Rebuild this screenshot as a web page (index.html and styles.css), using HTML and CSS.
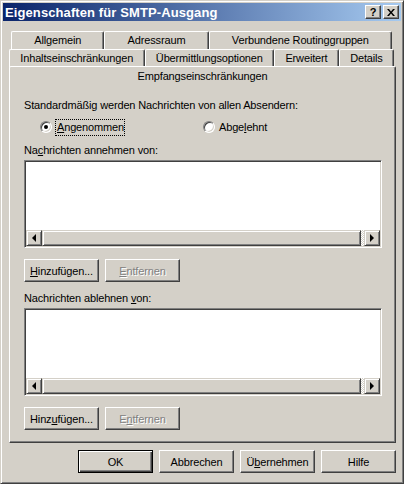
FILE: index.html
```html
<!DOCTYPE html>
<html lang="de">
<head>
    <meta charset="UTF-8">
    <title>Eigenschaften für SMTP-Ausgang</title>
    <link rel="stylesheet" href="styles.css">
</head>
<body>

    <div class="window">
        <!-- Title bar -->
        <div class="titlebar">
            <span class="title">Eigenschaften für SMTP-Ausgang</span>
            <div class="caption-buttons">
                <span class="caption-btn">?</span>
                <span class="caption-btn close">
                    <svg width="8" height="7" viewBox="0 0 8 7"><path d="M0 0h2l2 2.5L6 0h2L5 3.5 8 7H6L4 4.5 2 7H0l3-3.5z" fill="#000"/></svg>
                </span>
            </div>
        </div>

        <div class="client">
            <!-- Tabs -->
            <div class="tabs">
                <div class="tab-row row-back">
                    <div class="tab">Allgemein</div>
                    <div class="tab">Adressraum</div>
                    <div class="tab">Verbundene Routinggruppen</div>
                </div>
                <div class="tab-row row-middle">
                    <div class="tab">Inhaltseinschränkungen</div>
                    <div class="tab">Übermittlungsoptionen</div>
                    <div class="tab">Erweitert</div>
                    <div class="tab">Details</div>
                </div>
                <div class="tab-row row-front">
                    <div class="tab active">Empfangseinschränkungen</div>
                </div>
            </div>

            <!-- Tab page -->
            <div class="panel">
                <div class="label">Standardmäßig werden Nachrichten von allen Absendern:</div>
                <div class="radio-row">
                    <div class="radio-option first">
                        <span class="radio checked"></span>
                        <span class="focus"><u>A</u>ngenommen</span>
                    </div>
                    <div class="radio-option">
                        <span class="radio"></span>
                        <span>Abge<u>l</u>ehnt</span>
                    </div>
                </div>

                <div class="label section">Na<u>c</u>hrichten annehmen von:</div>
                <div class="listbox">
                    <div class="list-body"></div>
                    <div class="hscroll">
                        <span class="sb-btn left"></span>
                        <span class="sb-thumb"></span>
                        <span class="sb-track"></span>
                        <span class="sb-btn right"></span>
                    </div>
                </div>
                <div class="button-row">
                    <span class="btn"><u>H</u>inzufügen...</span>
                    <span class="btn disabled"><u>E</u>ntfernen</span>
                </div>

                <div class="label section-2">Nachrichten ablehnen <u>v</u>on:</div>
                <div class="listbox">
                    <div class="list-body"></div>
                    <div class="hscroll">
                        <span class="sb-btn left"></span>
                        <span class="sb-thumb"></span>
                        <span class="sb-track"></span>
                        <span class="sb-btn right"></span>
                    </div>
                </div>
                <div class="button-row">
                    <span class="btn">Hinz<u>u</u>fügen...</span>
                    <span class="btn disabled">E<u>n</u>tfernen</span>
                </div>
            </div>

            <!-- Dialog buttons -->
            <div class="dialog-buttons">
                <span class="btn default">OK</span>
                <span class="btn">Abbrechen</span>
                <span class="btn">Ü<u>b</u>ernehmen</span>
                <span class="btn">Hilfe</span>
            </div>
        </div>
    </div>

</body>
</html>
```

FILE: styles.css
```css
body {
    margin: 0;
    padding: 0;
    background-color: #d4d0c8;
    font-family: "Liberation Sans", Arial, sans-serif;
    font-size: 11px;
    letter-spacing: -0.15px;
    color: #000;
}
u {
    text-decoration: underline;
    text-underline-offset: 1px;
}
.window {
    width: 404px;
    height: 484px;
    box-sizing: border-box;
    padding: 2px;
    border: 1px solid;
    border-color: #d4d0c8 #404040 #404040 #d4d0c8;
    box-shadow: inset 1px 1px #fff, inset -1px -1px #808080;
    background: #d4d0c8;
}

/* title bar */
.titlebar {
    height: 18px;
    display: flex;
    align-items: center;
    justify-content: space-between;
    padding: 0 2px 0 2px;
    background: linear-gradient(to right, #0a246a, #a6caf0);
}
.title {
    color: #fff;
    font-weight: bold;
    font-size: 13px;
    letter-spacing: 0.1px;
}
.caption-buttons {
    display: flex;
    gap: 2px;
}
.caption-btn {
    width: 16px;
    height: 14px;
    box-sizing: border-box;
    display: flex;
    align-items: center;
    justify-content: center;
    background: #d4d0c8;
    border: 1px solid;
    border-color: #fff #404040 #404040 #fff;
    box-shadow: inset -1px -1px #808080;
    font-weight: bold;
    font-size: 11px;
    line-height: 1;
}

/* tabs */
.client {
    padding: 10px 5px 0 6px;
}
.tab-row {
    display: flex;
}
.row-back {
    height: 18px;
    padding: 0 4px 0 2px;
}
.row-middle {
    height: 17px;
    padding: 0 2px 0 0;
}
.row-front {
    height: 20px;
}
.tab {
    flex: 1 1 auto;
    padding: 0 6px;
    box-sizing: border-box;
    height: 19px;
    text-align: center;
    line-height: 17px;
    border-left: 1px solid #fff;
    border-top: 1px solid #fff;
    border-right: 1px solid #404040;
    border-radius: 2px 2px 0 0;
    box-shadow: inset -1px 0 #808080;
    background: #d4d0c8;
}
.tab.active {
    height: 20px;
    line-height: 18px;
}

/* tab page */
.panel {
    border: 1px solid;
    border-top: none;
    border-color: #fff #404040 #404040 #fff;
    box-shadow: inset -1px -1px #808080;
    padding: 13px 13px 12px 14px;
}
.label {
    height: 13px;
    line-height: 13px;
    white-space: nowrap;
}
.radio-row {
    display: flex;
    height: 16px;
    align-items: center;
    margin: 7px 0 0 16px;
}
.radio-option {
    display: flex;
    align-items: center;
    gap: 4px;
}
.radio-option.first {
    width: 163px;
}
.radio {
    width: 12px;
    height: 12px;
    border-radius: 50%;
    box-sizing: border-box;
    position: relative;
    background: #fff;
    border: 1px solid;
    border-color: #808080 #fff #fff #808080;
    box-shadow: inset 1px 1px #404040, inset -1px -1px #d4d0c8;
}
.radio.checked::after {
    content: "";
    position: absolute;
    left: 3px;
    top: 3px;
    width: 4px;
    height: 4px;
    border-radius: 50%;
    background: #000;
}
.focus {
    outline: 1px dotted #000;
    padding: 1px 0 1px 1px;
    line-height: 13px;
}
.section {
    margin-top: 9px;
}
.section-2 {
    margin-top: 10px;
}
.listbox {
    margin-top: 3px;
    height: 88px;
    box-sizing: border-box;
    display: flex;
    flex-direction: column;
    border: 1px solid;
    border-color: #808080 #fff #fff #808080;
    box-shadow: inset 1px 1px #404040, inset -1px -1px #d4d0c8;
    padding: 1px;
    background: #fff;
}
.list-body {
    flex: 1;
}
.hscroll {
    height: 16px;
    display: flex;
    background: #d4d0c8;
}
.sb-btn, .sb-thumb {
    box-sizing: border-box;
    border: 1px solid;
    border-color: #d4d0c8 #404040 #404040 #d4d0c8;
    box-shadow: inset 1px 1px #fff, inset -1px -1px #808080;
    background: #d4d0c8;
}
.sb-btn {
    width: 16px;
    height: 16px;
    display: flex;
    align-items: center;
    justify-content: center;
}
.sb-btn::after {
    content: "";
    width: 0;
    height: 0;
    border-top: 4px solid transparent;
    border-bottom: 4px solid transparent;
}
.sb-btn.left::after {
    border-right: 4px solid #000;
}
.sb-btn.right::after {
    border-left: 4px solid #000;
}
.sb-thumb {
    flex: 1;
}
.sb-track {
    width: 3px;
    background-color: #fff;
    background-image: repeating-conic-gradient(#d4d0c8 0 25%, #fff 0 50%);
    background-size: 2px 2px;
}

/* buttons */
.button-row {
    display: flex;
    gap: 6px;
    margin-top: 11px;
}
.btn {
    width: 75px;
    height: 23px;
    box-sizing: border-box;
    display: flex;
    align-items: center;
    justify-content: center;
    border: 1px solid;
    border-color: #fff #404040 #404040 #fff;
    box-shadow: inset -1px -1px #808080;
    background: #d4d0c8;
    white-space: nowrap;
}
.btn.disabled {
    color: #808080;
    text-shadow: 1px 1px #fff;
}
.btn.default {
    border-color: #000;
    box-shadow: inset 1px 1px #fff, inset -1px -1px #404040, inset -2px -2px #808080;
}
.dialog-buttons {
    display: flex;
    justify-content: flex-end;
    gap: 6px;
    margin-top: 7px;
}
```
